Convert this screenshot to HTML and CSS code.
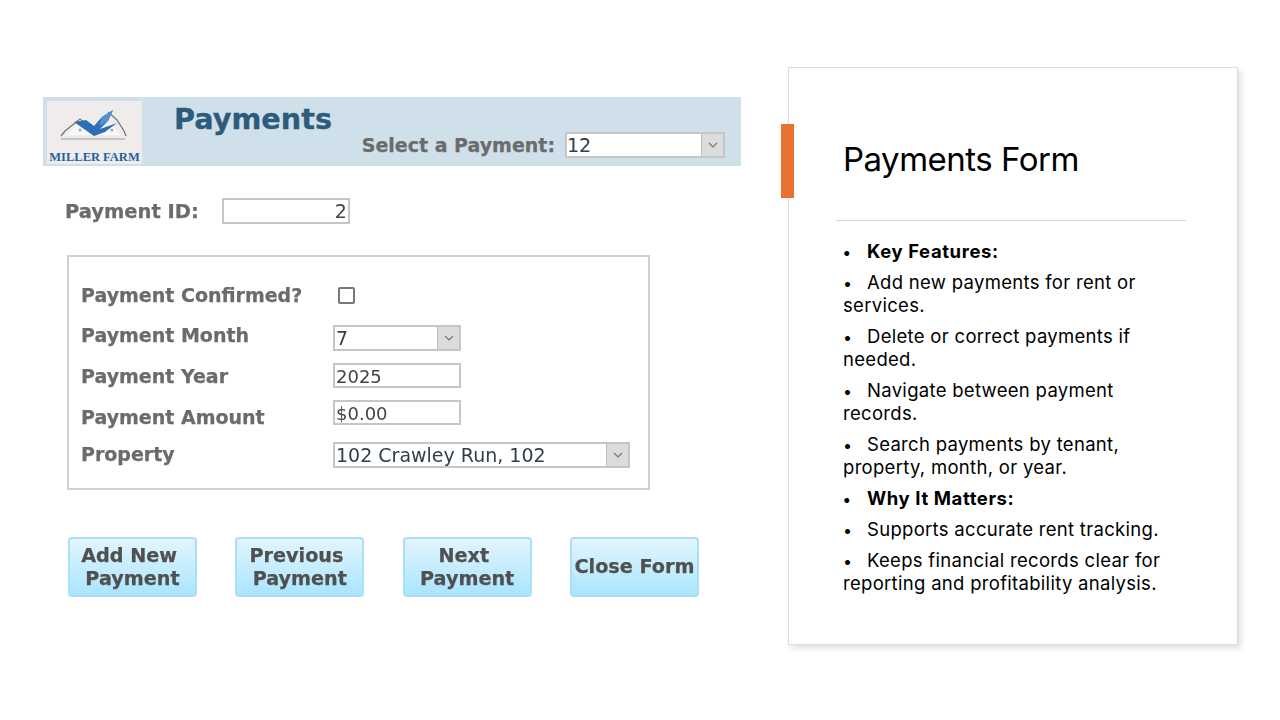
FILE: index.html
```html
<!DOCTYPE html>
<html lang="en">
<head>
<meta charset="utf-8">
<title>Payments Form</title>
<link rel="stylesheet" href="styles.css">
</head>
<body>
<main class="slide">
  <section class="form-shot">
    <header class="form-header">
      <div class="logo">
        <svg class="logo-art" viewBox="0 0 95 40" width="95" height="40" aria-hidden="true">
          <path d="M20 29 L33 15 L45 24 L48 27 L60 15 L66 20 L73 29 Z" fill="#f8f8fa"/>
          <path d="M14 30 L18 25 L33 13 L42 20" fill="none" stroke="#77777a" stroke-width="1.3"/>
          <path d="M61 6 L70 14 L77 25 L79 30" fill="none" stroke="#77777a" stroke-width="1.3"/>
          <path d="M14 33 H78" stroke="#9a9a9c" stroke-width="1.2"/>
          <path d="M27 16 L39 14 L47 20 L55 11 L66 4 L61 15 L53 23 L70 17 L58 26 L47 30 Z" fill="#2d6fb5"/>
          <path d="M55 11 L66 4 L61 15 L52 20 Z" fill="#4f93d1"/>
          <circle cx="33" cy="24" r="1.6" fill="#8fb6cf"/>
          <circle cx="65" cy="24" r="1.6" fill="#8fb6cf"/>
        </svg>
        <span class="logo-name">MILLER FARM</span>
      </div>
      <h1 class="form-title">Payments</h1>
      <div class="picker">
        <span class="label">Select a Payment:</span>
        <div class="combo combo-picker">
          <span class="combo-value">12</span>
          <span class="combo-arrow"><svg viewBox="0 0 10 6" width="10" height="6" aria-hidden="true"><path d="M1 1 L5 5 L9 1" fill="none" stroke="#777" stroke-width="1.2"/></svg></span>
        </div>
      </div>
    </header>

    <div class="id-row">
      <span class="label label-id">Payment ID:</span>
      <div class="field field-id">2</div>
    </div>

    <div class="details">
      <div class="row row-confirmed">
        <span class="label">Payment Confirmed?</span>
        <span class="checkbox"></span>
      </div>
      <div class="row row-month">
        <span class="label label-up">Payment Month</span>
        <div class="combo combo-short">
          <span class="combo-value">7</span>
          <span class="combo-arrow"><svg viewBox="0 0 10 6" width="10" height="6" aria-hidden="true"><path d="M1 1 L5 5 L9 1" fill="none" stroke="#777" stroke-width="1.2"/></svg></span>
        </div>
      </div>
      <div class="row row-year">
        <span class="label">Payment Year</span>
        <div class="field field-short">2025</div>
      </div>
      <div class="row row-amount">
        <span class="label label-down">Payment Amount</span>
        <div class="field field-short">$0.00</div>
      </div>
      <div class="row row-property">
        <span class="label label-nudge">Property</span>
        <div class="combo combo-long">
          <span class="combo-value">102 Crawley Run, 102</span>
          <span class="combo-arrow"><svg viewBox="0 0 10 6" width="10" height="6" aria-hidden="true"><path d="M1 1 L5 5 L9 1" fill="none" stroke="#777" stroke-width="1.2"/></svg></span>
        </div>
      </div>
    </div>

    <div class="actions">
      <div class="action">Add New&nbsp;<br>Payment</div>
      <div class="action">Previous&nbsp;<br>Payment</div>
      <div class="action">Next&nbsp;<br>Payment</div>
      <div class="action">Close Form</div>
    </div>
  </section>

  <aside class="card">
    <span class="accent"></span>
    <h2 class="card-title">Payments Form</h2>
    <hr class="card-rule">
    <ul class="notes">
      <li class="strong">Key Features:</li>
      <li>Add new payments for rent or services.</li>
      <li>Delete or correct payments if needed.</li>
      <li>Navigate between payment records.</li>
      <li>Search payments by tenant, property, month, or year.</li>
      <li class="strong">Why It Matters:</li>
      <li>Supports accurate rent tracking.</li>
      <li>Keeps financial records clear for reporting and profitability analysis.</li>
    </ul>
  </aside>
</main>
</body>
</html>
```
FILE: styles.css
```css
* { box-sizing: border-box; }
html, body { margin: 0; padding: 0; background: #fff; }
.slide {
  width: 1280px;
  height: 720px;
  overflow: hidden;
  display: flex;
  align-items: flex-start;
  padding: 67px 0 0 43px;
}

/* left: form picture */
.form-shot {
  width: 698px;
  margin-top: 30px;
  margin-right: 47px;
  font-family: "DejaVu Sans", sans-serif;
  filter: blur(0.45px);
}
.form-header {
  height: 69px;
  background: #d0e0ea;
  display: flex;
  padding: 4px 16px 0 4px;
}
.logo {
  width: 95px;
  height: 63px;
  background: #f0ecec;
  display: flex;
  flex-direction: column;
  align-items: center;
  padding-top: 5px;
}
.logo-art { display: block; flex: none; }
.logo-name {
  font-family: "Liberation Serif", serif;
  font-weight: 700;
  font-size: 12.5px;
  line-height: 13px;
  margin-top: 5px;
  color: #1d629c;
  white-space: nowrap;
}
.form-title {
  margin: 0 0 0 32px;
  font-size: 28.7px;
  line-height: 36px;
  font-weight: 700;
  color: #2c5b7c;
  -webkit-text-stroke: 0.3px #2c5b7c;
}
.picker {
  margin-left: auto;
  margin-top: 31px;
  height: 26px;
  display: flex;
  align-items: center;
  gap: 10px;
}
.label {
  font-size: 19px;
  font-weight: 700;
  color: #6b6b6b;
  white-space: nowrap;
  -webkit-text-stroke: 0.25px #6b6b6b;
}
.label-id { font-size: 19.5px; }
.combo, .field {
  height: 26px;
  border: 2px solid #c6c6c6;
  background: #fff;
  color: #2f3f4b;
  font-size: 19px;
  line-height: 23px;
}
.combo { display: flex; justify-content: space-between; }
.combo-value { padding-left: 1px; white-space: nowrap; }
.combo-picker .combo-value { padding-left: 0; }
.combo-arrow {
  width: 22px;
  background: #dcdcdc;
  border-left: 1px solid #bdbdbd;
  display: flex;
  align-items: center;
  justify-content: center;
}
.combo-picker { width: 160px; }
.combo-short { width: 128px; }
.combo-long { width: 297px; }
.field { padding: 0 1px; color: #444; }
.field-short { width: 128px; height: 25px; font-size: 18px; }
.field-id { width: 128px; text-align: right; height: 26px; }

.id-row {
  display: flex;
  align-items: center;
  gap: 23px;
  margin: 32px 0 0 22px;
  height: 26px;
}
.details {
  margin: 31px 0 0 24px;
  width: 583px;
  height: 235px;
  border: 2px solid #d0d0d0;
  padding: 0 0 0 12px;
  display: flex;
  flex-direction: column;
}
.row { display: flex; align-items: center; }
.row > .label { width: 252px; }
.label-up { margin-top: -3px; margin-bottom: 3px; }
.label-down { margin-top: 4px; margin-bottom: -4px; }
.label-nudge { margin-top: -1px; margin-bottom: 1px; }
.row-confirmed { margin-top: 23px; height: 30px; }
.row-month { margin-top: 15px; }
.row-year { margin-top: 12px; }
.row-amount { margin-top: 12px; }
.row-property { margin-top: 17px; }
.checkbox {
  width: 17px;
  height: 17px;
  margin-left: 5px;
  border: 2px solid #777;
  border-radius: 2px;
  background: #fff;
}
.actions {
  margin: 47px 0 0 25px;
  width: 631px;
  display: flex;
  justify-content: space-between;
}
.action {
  width: 129px;
  height: 60px;
  padding-bottom: 1px;
  border: 2px solid #a9e0f8;
  border-radius: 4px;
  background: linear-gradient(#e3f5fe, #a9e5fe);
  color: #505050;
  font-size: 19.2px;
  font-weight: 700;
  line-height: 23px;
  text-align: center;
  display: flex;
  align-items: center;
  justify-content: center;
  white-space: nowrap;
  -webkit-text-stroke: 0.25px #505050;
}

/* right: notes card */
.card {
  position: relative;
  width: 450px;
  height: 578px;
  background: #fff;
  border: 1px solid #dcdcdc;
  box-shadow: 3px 3px 6px rgba(0, 0, 0, 0.13);
  padding: 0 51px 0 47px;
  font-family: Inter, "Liberation Sans", sans-serif;
  color: #000;
}
.accent {
  position: absolute;
  left: -8px;
  top: 56px;
  width: 13px;
  height: 74px;
  background: #e97132;
}
.card-title {
  margin: 68px 0 0 7px;
  font-size: 33px;
  letter-spacing: -0.5px;
  line-height: 46px;
  font-weight: 400;
  white-space: nowrap;
}
.card-rule {
  margin: 38px 0 0 0;
  border: 0;
  border-top: 1px solid #d4d4d4;
  height: 0;
}
.notes {
  list-style: none;
  margin: 19px 0 0 7px;
  padding: 0;
  font-size: 18.5px;
  letter-spacing: 0.3px;
  line-height: 23px;
}
.notes li { margin-bottom: 8px; }
.notes li::before {
  content: "•";
  display: inline-block;
  width: 24px;
  font-size: 16px;
  line-height: 1;
}
.notes .strong { font-weight: 700; letter-spacing: 0.6px; }
```
